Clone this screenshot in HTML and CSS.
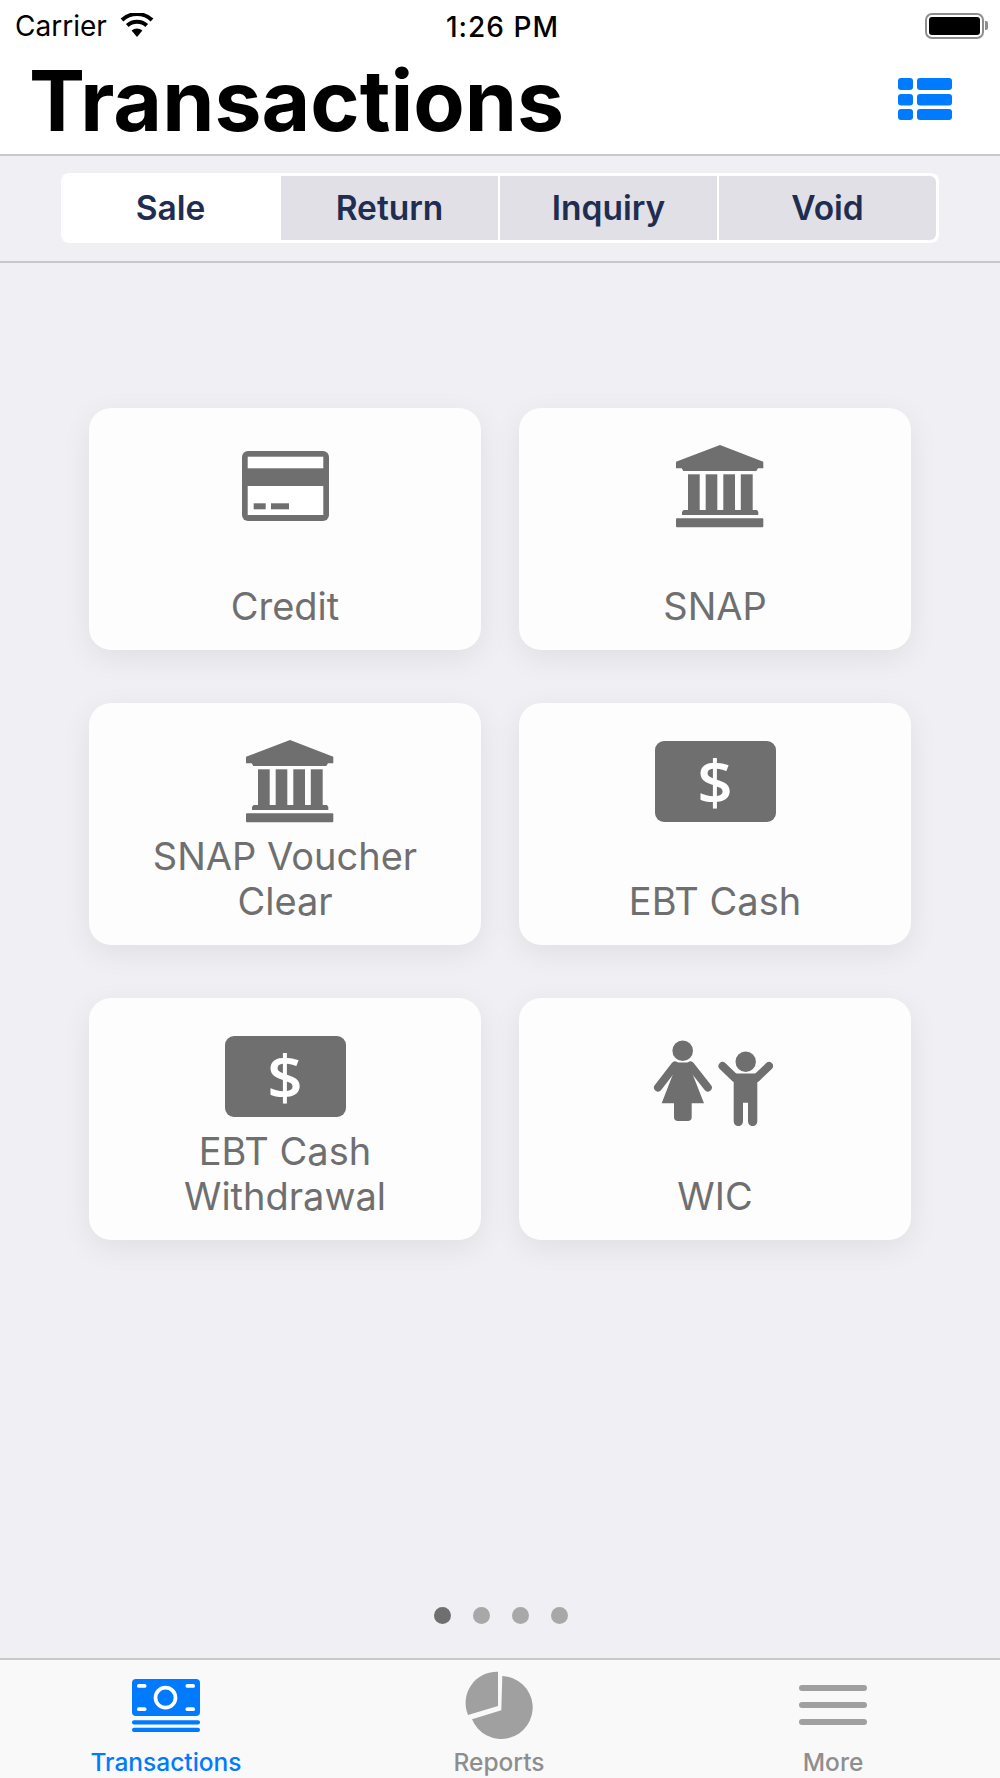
FILE: index.html
```html
<!DOCTYPE html>
<html lang="en">

<head>
  <meta charset="UTF-8">
  <meta name="viewport" content="width=device-width, initial-scale=1.0">
  <title>Transactions</title>
  <link rel="stylesheet" href="styles.css">
</head>

<body>
  <div class="app">
    <!-- status bar -->
    <div class="status-bar">
      <div class="status-left">
        <span>Carrier</span>
        <svg class="wifi" width="36" height="24" viewBox="0 0 36 24">
          <path d="M18 24 12.6 17.6a8 8 0 0 1 10.8 0Z" fill="#000"/>
          <path d="M8.3 12.6a14.4 14.4 0 0 1 19.4 0" fill="none" stroke="#000" stroke-width="4"/>
          <path d="M3 7a22 22 0 0 1 30 0" fill="none" stroke="#000" stroke-width="4"/>
        </svg>
      </div>
      <div class="status-time">1:26 PM</div>
      <div class="status-right">
        <div class="battery"><div class="battery-fill"></div></div>
        <div class="battery-cap"></div>
      </div>
    </div>

    <!-- title -->
    <header class="nav-bar">
      <h1>Transactions</h1>
      <svg class="list-icon" width="54" height="42" viewBox="0 0 54 42" fill="#007aff">
        <rect x="0" y="0" width="15" height="12" rx="3"/>
        <rect x="19" y="0" width="35" height="12" rx="3"/>
        <rect x="0" y="16" width="15" height="11.500" rx="3"/>
        <rect x="19" y="16" width="35" height="11.500" rx="3"/>
        <rect x="0" y="31" width="15" height="11" rx="3"/>
        <rect x="19" y="31" width="35" height="11" rx="3"/>
      </svg>
    </header>

    <!-- segment tabs -->
    <div class="segment-bar">
      <div class="segments">
        <div class="segment active">Sale</div>
        <div class="segment">Return</div>
        <div class="segment">Inquiry</div>
        <div class="segment">Void</div>
      </div>
    </div>

    <main class="content">
      <div class="card-grid">
        <div class="card">
          <svg class="icon icon-credit" width="87" height="70" viewBox="0 0 87 70">
            <rect width="87" height="70" rx="6" fill="#6f6f6f"/>
            <rect x="5.700" y="5.700" width="75.600" height="11.600" fill="#fff"/>
            <rect x="5.700" y="35" width="75.600" height="29" fill="#fff"/>
            <rect x="11.700" y="52.300" width="12" height="6" fill="#6f6f6f"/>
            <rect x="29" y="52.300" width="18" height="6" fill="#6f6f6f"/>
          </svg>
          <div class="card-label">Credit</div>
        </div>
        <div class="card">
          <svg class="icon icon-bank" width="88" height="83" viewBox="0 0 88 83" fill="#6f6f6f">
            <path d="M44 0 87.300 16.700V23.300H82L80.300 26H7.300L5.700 23.300H0V16.700Z"/>
            <rect x="12" y="29.300" width="11.700" height="36"/>
            <rect x="29.700" y="29.300" width="11.600" height="36"/>
            <rect x="47.300" y="29.300" width="11.700" height="36"/>
            <rect x="64.800" y="29.300" width="11.900" height="36"/>
            <path d="M7.500 65H81L82.300 67V70H6V67Z"/>
            <rect y="73.300" width="87.300" height="9" rx="1"/>
          </svg>
          <div class="card-label">SNAP</div>
        </div>
        <div class="card">
          <svg class="icon icon-bank" width="88" height="83" viewBox="0 0 88 83" fill="#6f6f6f">
            <path d="M44 0 87.300 16.700V23.300H82L80.300 26H7.300L5.700 23.300H0V16.700Z"/>
            <rect x="12" y="29.300" width="11.700" height="36"/>
            <rect x="29.700" y="29.300" width="11.600" height="36"/>
            <rect x="47.300" y="29.300" width="11.700" height="36"/>
            <rect x="64.800" y="29.300" width="11.900" height="36"/>
            <path d="M7.500 65H81L82.300 67V70H6V67Z"/>
            <rect y="73.300" width="87.300" height="9" rx="1"/>
          </svg>
          <div class="card-label">SNAP Voucher<br>Clear</div>
        </div>
        <div class="card">
          <div class="icon icon-cash">$</div>
          <div class="card-label">EBT Cash</div>
        </div>
        <div class="card">
          <div class="icon icon-cash">$</div>
          <div class="card-label">EBT Cash<br>Withdrawal</div>
        </div>
        <div class="card">
          <svg class="icon icon-wic" width="120" height="86" viewBox="0 0 120 86" fill="#6f6f6f">
            <circle cx="29.700" cy="10.700" r="10.300"/>
            <path d="M22 22.500H37.500C39 22.500 40.500 23.500 41 24.500L39.500 34 51 63.300H8.700L20 34 18.500 24.500C19 23.500 20.500 22.500 22 22.500Z"/>
            <path d="M22 25.500 5 47.500M37.500 25.500 54.800 47.500" fill="none" stroke="#6f6f6f" stroke-width="8" stroke-linecap="round"/>
            <path d="M21 60H38.700V77A4 4 0 0 1 34.700 81H25A4 4 0 0 1 21 77Z"/>
            <circle cx="92.700" cy="21.700" r="10.200"/>
            <path d="M69.500 26 82 38M116 26 103.500 38" fill="none" stroke="#6f6f6f" stroke-width="8" stroke-linecap="round"/>
            <path d="M83 33.500H102.500A2 2 0 0 1 104.300 35.500V81.500A4.500 4.500 0 0 1 95 81.500V62.700H90V81.500A4.500 4.500 0 0 1 80.700 81.500V35.500A2 2 0 0 1 83 33.500Z"/>
          </svg>
          <div class="card-label">WIC</div>
        </div>
      </div>

      <div class="dots">
        <span class="dot active"></span>
        <span class="dot"></span>
        <span class="dot"></span>
        <span class="dot"></span>
      </div>
    </main>

    <!-- bottom tabs -->
    <nav class="tab-bar">
      <div class="tab active">
        <svg class="tab-icon" width="68" height="68" viewBox="0 0 68 68">
          <g transform="translate(0 8)">
            <rect width="68" height="37" rx="4" fill="#007aff"/>
            <circle cx="33.500" cy="18.700" r="10" fill="none" stroke="#fff" stroke-width="3.700"/>
            <rect x="5" y="5" width="9.500" height="3.800" rx="1.900" fill="#fff"/>
            <rect x="53.500" y="5" width="9.500" height="3.800" rx="1.900" fill="#fff"/>
            <rect x="5" y="28.300" width="9.500" height="3.800" rx="1.900" fill="#fff"/>
            <rect x="53.500" y="28.300" width="9.500" height="3.800" rx="1.900" fill="#fff"/>
            <rect y="41.300" width="68" height="4.300" rx="2" fill="#007aff"/>
            <rect y="48.700" width="68" height="4.300" rx="2" fill="#007aff"/>
          </g>
        </svg>
        <span>Transactions</span>
      </div>
      <div class="tab">
        <svg class="tab-icon" width="68" height="68" viewBox="0 0 68 68" fill="#a0a0a0">
          <path d="M36.300 39.300 37.300 5A31.500 31.500 0 1 1 7 48.300Z"/>
          <path d="M33 35V.7A31.300 31.300 0 0 0 3 44Z"/>
        </svg>
        <span>Reports</span>
      </div>
      <div class="tab">
        <svg class="tab-icon" width="68" height="68" viewBox="0 0 68 68" fill="#a0a0a0">
          <rect y="14" width="68" height="6" rx="3"/>
          <rect y="31" width="68" height="6" rx="3"/>
          <rect y="48" width="68" height="6" rx="3"/>
        </svg>
        <span>More</span>
      </div>
    </nav>
  </div>
</body>

</html>
```

FILE: styles.css
```css
* {
  box-sizing: border-box;
}

body {
  margin: 0;
  font-family: Inter, "Liberation Sans", sans-serif;
  background: #efeff4;
}

.app {
  width: 1000px;
  height: 1778px;
  display: flex;
  flex-direction: column;
  overflow: hidden;
}

/* status bar */
.status-bar {
  height: 48px;
  background: #fff;
  display: flex;
  align-items: center;
  justify-content: space-between;
  padding: 3px 12px 0 15px;
  font-size: 28px;
  color: #000;
  position: relative;
}

.status-left {
  display: flex;
  align-items: center;
  gap: 12px;
}

.wifi {
  margin-top: -1px;
}

.status-time {
  position: absolute;
  left: 446px;
  top: 10px;
  font-weight: 500;
  letter-spacing: 1px;
}

.status-right {
  display: flex;
  align-items: center;
}

.battery {
  width: 59px;
  height: 26px;
  border: 2px solid #8e8e8e;
  border-radius: 7px;
  padding: 2px;
}

.battery-fill {
  height: 100%;
  background: #000;
  border-radius: 3px;
}

.battery-cap {
  width: 3px;
  height: 9px;
  background: #8e8e8e;
  border-radius: 0 2px 2px 0;
  margin-left: 1px;
}

/* title */
.nav-bar {
  height: 108px;
  background: #fff;
  border-bottom: 2px solid #c8c7cc;
  display: flex;
  align-items: flex-start;
  justify-content: space-between;
  padding: 0 48px 0 29px;
}

.nav-bar h1 {
  margin: 8px 0 0;
  font-size: 84px;
  font-weight: 700;
  line-height: 90px;
  color: #000;
}

.list-icon {
  margin-top: 30px;
}

/* segments */
.segment-bar {
  height: 107px;
  padding: 17px 61px 0;
  border-bottom: 2px solid #c8c7cc;
  flex-shrink: 0;
}

.segments {
  height: 70px;
  background: #fff;
  border-radius: 8px;
  padding: 3px 3px 3px 1px;
  display: grid;
  grid-template-columns: repeat(4, 1fr);
  gap: 2px;
}

.segment {
  background: #e0e0e6;
  display: flex;
  align-items: center;
  justify-content: center;
  font-size: 33.500px;
  font-weight: 600;
  color: #1f2d50;
}

.segment:last-child {
  border-radius: 0 6px 6px 0;
}

.segment.active {
  background: #fff;
  border-radius: 6px 0 0 6px;
}

/* cards */
.content {
  flex: 1;
  display: flex;
  flex-direction: column;
  align-items: center;
  padding-top: 145px;
}

.card-grid {
  display: grid;
  grid-template-columns: repeat(2, 392px);
  grid-auto-rows: 242px;
  column-gap: 38px;
  row-gap: 53px;
}

.card {
  background: #fdfdfe;
  border-radius: 22px;
  box-shadow: 0 8px 30px rgba(0, 0, 0, 0.07);
  display: flex;
  flex-direction: column;
  align-items: center;
  justify-content: space-between;
  padding-bottom: 21px;
}

.card-label {
  font-size: 38px;
  line-height: 45px;
  color: #6f6f6f;
  text-align: center;
}

.icon-credit {
  margin-top: 43px;
}

.icon-bank {
  margin-top: 37px;
  margin-left: 9px;
}

.icon-wic {
  margin-top: 42px;
  margin-left: -4px;
}

.icon-cash {
  width: 121px;
  height: 81px;
  margin-top: 38px;
  background: #6f6f6f;
  border-radius: 9px;
  color: #fff;
  font-family: "Open Sans", sans-serif;
  font-size: 62px;
  font-weight: 600;
  line-height: 81px;
  text-align: center;
}

/* page dots */
.dots {
  margin-top: auto;
  margin-bottom: 34px;
  margin-left: 1px;
  display: flex;
  gap: 22px;
}

.dot {
  width: 17px;
  height: 17px;
  border-radius: 50%;
  background: #a8a8a8;
}

.dot.active {
  background: #6f6f6f;
}

/* bottom tabs */
.tab-bar {
  height: 120px;
  flex-shrink: 0;
  background: #f9f9f9;
  border-top: 2px solid #c8c7cc;
  display: grid;
  grid-template-columns: 332px 334px 334px;
}

.tab {
  display: flex;
  flex-direction: column;
  align-items: center;
  padding-top: 11px;
  font-size: 24.500px;
  font-weight: 500;
  color: #8e8e8e;
}

.tab-icon {
  flex-shrink: 0;
}

.tab span {
  margin-top: 9px;
  line-height: 28px;
}

.tab.active {
  color: #007aff;
}
```
